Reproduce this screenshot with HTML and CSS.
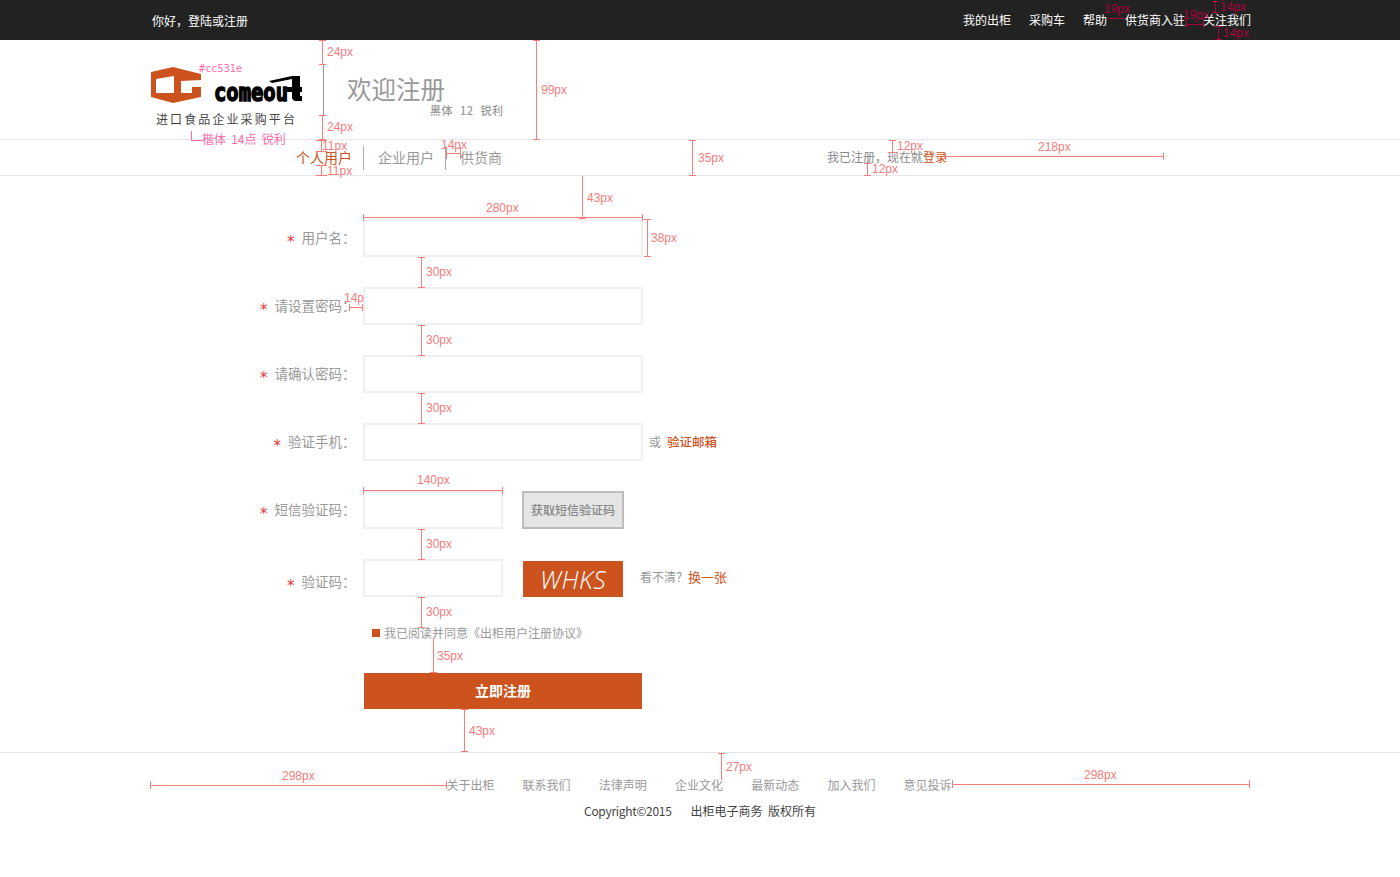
FILE: index.html
```html
<!DOCTYPE html>
<html lang="zh-CN">
	<head>
		<meta charset="utf-8">
		<title>欢迎注册</title>
		<link rel="stylesheet" href="styles.css">
	</head>
	<body>
		<div class="topbar">
			<div class="wrap topbar-in">
				<span class="hello">你好，登陆或注册</span>
				<div class="topnav">
					<a>我的出柜</a>
					<a>采购车</a>
					<a>帮助</a>
					<a>供货商入驻</a>
					<a>关注我们</a>
				</div>
			</div>
		</div>

		<div class="wrap header">
			<div class="logo">
				<svg class="logo-mark" width="153" height="38" viewBox="0 0 153 38">
					<path class="logo-house" fill-rule="evenodd" d="M1 5 23 0 51 7V13L31 14V26H42V20H51V30L23 36 1 30ZM6 12V26H24V9Z"/>
					<text class="logo-word" transform="scale(.82 1)" x="78" y="34">comeou</text>
					<path class="logo-roof" d="M119 14 142 9V12L122 16Z"/>
					<path class="logo-roof" d="M142 9H150V20H152V25H150V29H152V34H146Q142 34 142 30V25H137V20H142Z"/>
				</svg>
				<p class="tagline">进口食品企业采购平台</p>
			</div>
			<div class="header-line"></div>
			<h1 class="title">欢迎注册</h1>
		</div>

		<div class="tabs">
			<div class="wrap tabs-in">
				<a class="tab tab-on">个人用户</a>
				<a class="tab">企业用户</a>
				<a class="tab tab-last">供货商</a>
				<p class="have-account">我已注册，现在就<a class="orange">登录</a></p>
			</div>
		</div>

		<form class="wrap form">
			<div class="row">
				<label class="label"><i class="star">*</i>用户名：</label>
				<input class="field" type="text">
			</div>
			<div class="row">
				<label class="label"><i class="star">*</i>请设置密码：</label>
				<input class="field" type="password">
			</div>
			<div class="row">
				<label class="label"><i class="star">*</i>请确认密码：</label>
				<input class="field" type="password">
			</div>
			<div class="row">
				<label class="label"><i class="star">*</i>验证手机：</label>
				<input class="field" type="text">
				<span class="or">或</span>
				<a class="orange mail">验证邮箱</a>
			</div>
			<div class="row">
				<label class="label"><i class="star">*</i>短信验证码：</label>
				<input class="field field-short" type="text">
				<button class="sms" type="button">获取短信验证码</button>
			</div>
			<div class="row">
				<label class="label label-low"><i class="star">*</i>验证码：</label>
				<input class="field field-short" type="text">
				<div class="captcha">WHKS</div>
				<span class="unclear">看不清？</span>
				<a class="orange swap">换一张</a>
			</div>
			<p class="agree"><span class="agree-box"></span>我已阅读并同意《出柜用户注册协议》</p>
			<button class="submit" type="button">立即注册</button>
		</form>

		<div class="footer">
			<div class="footer-links">
				<a>关于出柜</a>
				<a>联系我们</a>
				<a>法律声明</a>
				<a>企业文化</a>
				<a>最新动态</a>
				<a>加入我们</a>
				<a>意见投诉</a>
			</div>
			<p class="copyright">Copyright©2015<span class="company">出柜电子商务&nbsp;&nbsp;版权所有</span></p>
		</div>

		<!-- spec marks drawn over the page -->
		<svg class="marks" width="1400" height="877" viewBox="0 0 1400 877">
			<path class="mark-line" d="M319 40.500H326M322.500 40V64M319 64.500H326
				M319 115.500H326M322.500 115V139M319 139.500H326
				M316 140.500H327M321.500 140V151M316 151.500H327
				M316 165.500H327M321.500 165V176M316 175.500H327
				M533 40.500H540M536.500 40V139M533 139.500H540
				M446.500 147V159M446 153.500H460M460.500 147V159
				M689 140.500H696M692.500 140V176M689 175.500H696
				M889 140.500H896M892.500 140V152M889 152.500H896
				M864 163.500H871M867.500 163V176M864 175.500H871
				M945.500 153V160M945 156.500H1164M1163.500 153V160
				M579 218.500H586M582.500 176V218
				M363.500 214V221M363 217.500H643M642.500 214V221
				M644 219.500H651M647.500 219V257M644 256.500H651
				M418 257.500H425M421.500 257V287M418 287.500H425
				M418 325.500H425M421.500 325V355M418 355.500H425
				M418 393.500H425M421.500 393V423M418 423.500H425
				M418 529.500H425M421.500 529V559M418 559.500H425
				M418 597.500H425M421.500 597V627M418 627.500H425
				M349.500 304V311M349 307.500H363M362.500 304V311
				M363.500 487V494M363 490.500H503M502.500 487V494
				M433.500 638V673M430 672.500H437
				M461 709.500H468M464.500 709V752M461 751.500H468
				M718 753.500H725M721.500 753V780
				M150.500 781V789M150 785.500H447M446.500 781V789
				M952.500 780V788M952 784.500H1250M1249.500 780V788"/>
			<path class="mark-dark" d="M1108 18.500H1126M1186.500 18V28M1186 24.500H1204M1203.500 18V28
				M1212 1.500H1219M1215.500 1V12M1212 12.500H1219
				M1215 26.500H1222M1218.500 26V40M1215 39.500H1222"/>
			<path class="mark-pink" d="M191.500 131V141M191 140.500H202"/>
			<g class="mark-text">
				<text x="327" y="56">24px</text>
				<text x="327" y="131">24px</text>
				<text x="541" y="94">99px</text>
				<text x="322" y="150">11px</text>
				<text x="327" y="175">11px</text>
				<text x="441" y="149">14px</text>
				<text x="698" y="162">35px</text>
				<text x="897" y="150">12px</text>
				<text x="872" y="173">12px</text>
				<text x="1038" y="151">218px</text>
				<text x="587" y="202">43px</text>
				<text x="486" y="212">280px</text>
				<text x="651" y="242">38px</text>
				<text x="426" y="276">30px</text>
				<text x="426" y="344">30px</text>
				<text x="426" y="412">30px</text>
				<text x="344" y="302">14p</text>
				<text x="417" y="484">140px</text>
				<text x="426" y="548">30px</text>
				<text x="426" y="616">30px</text>
				<text x="437" y="660">35px</text>
				<text x="469" y="735">43px</text>
				<text x="726" y="771">27px</text>
				<text x="282" y="780">298px</text>
				<text x="1084" y="779">298px</text>
			</g>
			<g class="mark-text mark-text-dark">
				<text x="1104" y="13">19px</text>
				<text x="1183" y="19">19px</text>
				<text x="1220" y="11">14px</text>
				<text x="1223" y="37">14px</text>
			</g>
			<text class="mark-hex" x="199" y="72">#cc531e</text>
			<text class="mark-kai" x="202" y="144">楷体 14点 锐利</text>
			<text class="mark-hei" x="430" y="115">黑体 12 锐利</text>
		</svg>
	</body>
</html>
```

FILE: styles.css
```css
html{
	font-family: "Noto Sans CJK SC", "Noto Sans", sans-serif;
}
body{
	margin: 0;
	position: relative;
	min-height: 877px;
	background: white;
	font-size: 12px;
	color: #999999;
}
p,h1{
	margin: 0;
}
a{
	cursor: pointer;
}
.wrap{
	width: 1100px;
	margin: 0 auto;
}
.orange{
	color: #cc531e;
}

.topbar{
	height: 40px;
	background: #222222;
	color: white;
}
.topbar-in{
	display: flex;
	justify-content: space-between;
	align-items: center;
	height: 40px;
}
.hello{
	padding-left: 2px;
}
.topnav{
	display: flex;
	gap: 18px;
	margin-right: -1px;
	padding-bottom: 2px;
}

.header{
	display: flex;
	align-items: center;
	height: 99px;
}
.logo{
	align-self: flex-start;
	width: 173px;
	padding-top: 27px;
}
.logo-mark{
	display: block;
	overflow: visible;
}
.logo-house{
	fill: #cc531e;
}
.logo-word{
	font-family: "DejaVu Sans Mono", monospace;
	font-size: 25px;
	font-weight: bold;
	fill: black;
	stroke: black;
	stroke-width: 1.500px;
}
.logo-roof{
	fill: black;
}
.tagline{
	margin: 5px 0 0 6px;
	font-size: 12px;
	line-height: 18px;
	letter-spacing: 2.100px;
	color: #444444;
}
.header-line{
	width: 1px;
	height: 51px;
	background: #999999;
}
.title{
	margin: -1px 0 0 23px;
	font-size: 24.500px;
	font-weight: normal;
	line-height: 30px;
	color: #999999;
}

.tabs{
	border-top: 1px solid #e8e8e8;
	border-bottom: 1px solid #e8e8e8;
	height: 35px;
}
.tabs-in{
	display: flex;
	align-items: center;
	height: 35px;
}
.tab{
	height: 24px;
	padding: 0 11px 0 14px;
	border-right: 1px solid #aaaaaa;
	font-size: 14px;
	line-height: 22px;
	color: #999999;
}
.tab-on{
	margin-left: 146px;
	padding-left: 0;
	color: #cc531e;
}
.tab-last{
	border-right: none;
}
.have-account{
	margin-left: auto;
	margin-right: 303px;
	padding-bottom: 2px;
	color: #888888;
}

.form{
	padding-top: 43px;
}
.row{
	display: flex;
	align-items: center;
	height: 38px;
	margin-bottom: 30px;
}
.label{
	display: flex;
	justify-content: flex-end;
	box-sizing: border-box;
	width: 205.500px;
	margin-right: 7.500px;
	padding-top: 3px;
	font-family: "Noto Sans CJK TC", "Noto Sans CJK SC", sans-serif;
	font-size: 13.500px;
	line-height: 20px;
	color: #999999;
}
.label-low{
	padding-top: 10px;
}
.star{
	margin: 5px 7px 0 0;
	font-family: "DejaVu Sans", sans-serif;
	font-style: normal;
	font-size: 15px;
	color: #e8393c;
}
.field{
	width: 280px;
	height: 38px;
	box-sizing: border-box;
	border: 2px solid #f0f0f0;
	outline: none;
	background: white;
}
.field-short{
	width: 140px;
}
.or{
	margin-left: 6px;
	padding-bottom: 1px;
	color: #999999;
}
.mail{
	margin-left: 6px;
	padding-bottom: 1px;
	font-size: 12.500px;
	font-weight: 500;
}
.sms{
	width: 102px;
	height: 38px;
	margin-left: 19px;
	padding: 0 0 1px;
	border: 2px solid #bdbdbd;
	background: #e5e5e5;
	font-family: inherit;
	font-size: 12px;
	font-weight: 500;
	color: #888888;
}
.captcha{
	width: 100px;
	height: 36px;
	margin: 2px 0 0 20px;
	background: #cc531e;
	font-family: "Open Sans", sans-serif;
	font-size: 25px;
	font-weight: 300;
	font-style: italic;
	line-height: 36px;
	letter-spacing: 0.500px;
	text-indent: 17px;
	color: white;
}
.unclear{
	margin-left: 17px;
	padding-bottom: 3px;
	color: #999999;
}
.swap{
	padding-bottom: 3px;
	font-size: 13px;
}
.agree{
	display: flex;
	align-items: center;
	height: 12px;
	margin-left: 222px;
	line-height: 12px;
	color: #999999;
}
.agree-box{
	width: 8px;
	height: 8px;
	margin-right: 4px;
	background: #cc531e;
}
.submit{
	display: block;
	width: 278px;
	height: 36px;
	margin: 34px 0 43px 214px;
	padding: 0 0 2px;
	border: none;
	background: #cc531e;
	font-family: inherit;
	font-size: 14px;
	font-weight: bold;
	color: white;
}

.footer{
	border-top: 1px solid #e8e8e8;
}
.footer-links{
	display: flex;
	justify-content: center;
	gap: 28.200px;
	margin: 23px 0 0 -2px;
	line-height: 18px;
	color: #999999;
}
.copyright{
	margin-top: 8px;
	line-height: 18px;
	letter-spacing: -0.300px;
	text-align: center;
	color: #444444;
}
.company{
	margin-left: 19px;
	letter-spacing: 0;
}

.marks{
	position: absolute;
	left: 0;
	top: 0;
	pointer-events: none;
}
.mark-line,.mark-dark,.mark-pink{
	fill: none;
	stroke-width: 1px;
}
.mark-line{
	stroke: #f77c7c;
}
.mark-dark{
	stroke: #a8003c;
}
.mark-pink{
	stroke: #ff6aa8;
}
.mark-text text{
	font-family: "Liberation Sans", sans-serif;
	font-size: 12px;
	fill: #f77c7c;
}
.mark-text-dark text{
	fill: #a8003c;
}
.mark-hex{
	font-family: "DejaVu Sans Mono", monospace;
	font-size: 10px;
	letter-spacing: 0.150px;
	fill: #ff6aa8;
}
.mark-kai{
	font-size: 12px;
	word-spacing: 2.500px;
	fill: #ff6aa8;
}
.mark-hei{
	font-size: 11px;
	font-weight: 500;
	word-spacing: 4px;
	letter-spacing: 0.500px;
	fill: #999999;
}
```
